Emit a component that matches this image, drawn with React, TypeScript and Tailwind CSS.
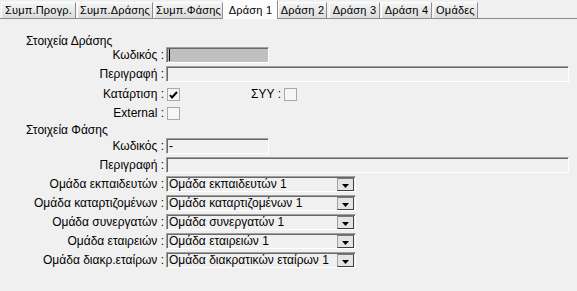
import React from "react";

const tabs = [
  { label: "Συμπ.Προγρ.", w: 75, ml: 1 },
  { label: "Συμπ.Δράσης", w: 76, ml: 1 },
  { label: "Συμπ.Φάσης", w: 69, ml: 1 },
  { label: "Δράση 1", w: 55, ml: 0, active: true },
  { label: "Δράση 2", w: 49, ml: 0 },
  { label: "Δράση 3", w: 51, ml: 2 },
  { label: "Δράση 4", w: 51, ml: 1 },
  { label: "Ομάδες", w: 45, ml: 1 },
];

const groups = [
  ["Ομάδα εκπαιδευτών :", "Ομάδα εκπαιδευτών 1"],
  ["Ομάδα καταρτιζομένων :", "Ομάδα καταρτιζομένων 1"],
  ["Ομάδα συνεργατών :", "Ομάδα συνεργατών 1"],
  ["Ομάδα εταιρειών :", "Ομάδα εταιρειών 1"],
  ["Ομάδα διακρ.εταίρων :", "Ομάδα διακρατικών εταίρων 1"],
];

const sunken =
  "border border-t-[#a0a0a0] border-l-[#a0a0a0] border-r-white border-b-white shadow-[inset_1px_1px_0_#696969]";

function Label({ children }: { children: React.ReactNode }) {
  return <div className="w-[165px] shrink-0 pr-[1px] text-right">{children}</div>;
}

function Check({ checked }: { checked?: boolean }) {
  return (
    <div className="flex h-[13px] w-[13px] items-center justify-center border border-[#a8a8a8] bg-[#f6f6f6]">
      {checked && (
        <svg width="9" height="8" viewBox="0 0 9 8">
          <path d="M1 4 L3 6.5 L8 1" stroke="#000" strokeWidth="2" fill="none" />
        </svg>
      )}
    </div>
  );
}

export default function App() {
  return (
    <div className="h-[291px] w-[577px] overflow-hidden bg-[#f0f0f0] font-['Liberation_Sans','DejaVu_Sans',sans-serif] text-[12px] leading-[13px] text-black">
      {/* tab strip */}
      <div className="flex h-[18px] items-end text-[11px] tracking-[0.2px]">
        {tabs.map((t) =>
          t.active ? (
            <div
              key={t.label}
              style={{ width: t.w }}
              className="relative z-10 -mb-px flex h-[19px] shrink-0 items-start justify-center whitespace-nowrap border-l border-t border-white border-r border-r-[#8c8c8c] bg-[#fcfcfc] pt-[3px]"
            >
              {t.label}
            </div>
          ) : (
            <div
              key={t.label}
              style={{ width: t.w, marginLeft: t.ml }}
              className="flex h-[16px] shrink-0 items-center justify-center whitespace-nowrap border-l border-t border-white border-r border-r-[#8c8c8c] bg-linear-to-b from-[#f4f4f4] to-[#dcdcdc]"
            >
              {t.label}
            </div>
          ),
        )}
      </div>
      <div className="h-px bg-[#8c8c8c]" />

      <div className="flex flex-col">
        <div className="mt-[16px] h-[12px] pl-[26px] leading-[12px]">Στοιχεία Δράσης</div>

        <div className="flex h-[16px] items-center">
          <Label>Κωδικός :</Label>
          <div className={`relative ml-[1px] h-[16px] w-[103px] bg-[#c0c0c0] ${sunken}`}>
            <div className="absolute left-[2px] top-[1px] h-[12px] w-px bg-black" />
          </div>
        </div>

        <div className="mt-[3px] flex h-[16px] items-center">
          <Label>Περιγραφή :</Label>
          <div className={`ml-[1px] h-[16px] w-[403px] bg-[#f0f0f0] ${sunken}`} />
        </div>

        <div className="mt-[3px] flex h-[19px] items-center">
          <Label>Κατάρτιση :</Label>
          <div className="ml-[2px]">
            <Check checked />
          </div>
          <div className="w-[101px] text-right">ΣΥΥ :</div>
          <div className="ml-[3px]">
            <Check />
          </div>
        </div>

        <div className="flex h-[19px] items-center">
          <Label>External :</Label>
          <div className="ml-[2px]">
            <Check />
          </div>
        </div>

        <div className="flex h-[15px] items-start pl-[26px] pt-[1px]">Στοιχεία Φάσης</div>

        <div className="flex h-[16px] items-center">
          <Label>Κωδικός :</Label>
          <div className={`ml-[1px] flex h-[16px] w-[103px] items-center bg-[#f0f0f0] pl-[2px] ${sunken}`}>
            -
          </div>
        </div>

        <div className="mt-[3px] flex h-[16px] items-center">
          <Label>Περιγραφή :</Label>
          <div className={`ml-[1px] h-[16px] w-[403px] bg-[#f0f0f0] ${sunken}`} />
        </div>

        {groups.map(([label, value]) => (
          <div key={label} className="mt-[3px] flex h-[16px] items-center">
            <Label>{label}</Label>
            <div className={`ml-[1px] flex h-[16px] w-[190px] items-center justify-between bg-[#f0f0f0] pl-[2px] ${sunken}`}>
              <span>{value}</span>
              <div className="mr-[1px] flex h-[13px] w-[17px] items-end justify-center border border-t-[#7a7a7a] border-l-[#a0a0a0] border-r-[#404040] border-b-[#404040] bg-[#e4e4e4] pb-[2px]">
                <svg width="7" height="4" viewBox="0 0 7 4">
                  <path d="M0 0 H7 L3.5 4 Z" fill="#000" />
                </svg>
              </div>
            </div>
          </div>
        ))}
      </div>
    </div>
  );
}
